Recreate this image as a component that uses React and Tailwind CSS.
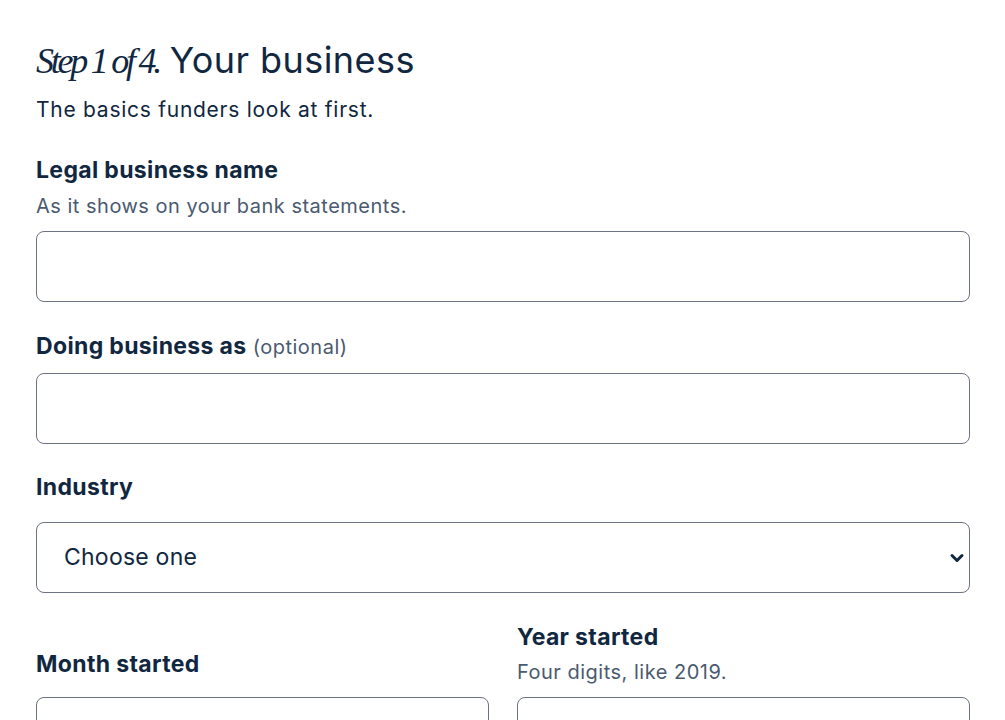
import React from 'react'

const sans = { fontFamily: 'Inter, "Noto Sans", sans-serif' }

const Field = ({ label, optional, hint, hintGap = 'mt-[7px]', children, className = '' }) => (
    <div className={`flex flex-col ${className}`}>
        <label className="text-[23px] leading-[30px] font-bold text-[#10273f] tracking-[0.015em]">
            {label}
            {optional && <span className="font-normal text-[20px] tracking-[0.025em] text-[#4a5a70]"> (optional)</span>}
        </label>
        {hint && <div className={`text-[20px] leading-[28px] tracking-[0.025em] text-[#4a5a70] ${hintGap}`}>{hint}</div>}
        {children}
    </div>
)

const TextInput = () => (
    <input
        type="text"
        className="h-[71px] w-full rounded-[8px] border border-[#6b7280] bg-white px-[27px] text-[23px] text-[#10273f] outline-none"
    />
)

export default function App() {
    return (
        <div className="bg-white min-h-screen px-[36px] pt-[38px] text-[#10273f]" style={sans}>
            <h1 className="text-[36px] leading-[44px] font-normal tracking-[0.012em]">
                <span className="italic tracking-[-0.09em]" style={{ fontFamily: '"Liberation Serif", serif' }}>
                    Step 1 of 4.
                </span>{' '}
                Your business
            </h1>
            <p className="text-[21px] leading-[28px] mt-[13px] tracking-[0.035em]">The basics funders look at first.</p>

            <div className="flex flex-col gap-[28.5px] mt-[31px] w-[934px]">
                <Field label="Legal business name" hint="As it shows on your bank statements.">
                    <div className="mt-[11px]"><TextInput /></div>
                </Field>
                <Field label="Doing business as" optional>
                    <div className="mt-[11px]"><TextInput /></div>
                </Field>
                <Field label="Industry">
                    <div className="mt-[20px] relative">
                        <select className="h-[71px] w-full appearance-none rounded-[8px] border border-[#6b7280] bg-white pl-[27px] pr-[40px] text-[23px] tracking-[0.01em] text-[#10273f] outline-none">
                            <option>Choose one</option>
                        </select>
                        <svg className="absolute right-[5px] top-1/2 -translate-y-1/2 pointer-events-none" width="16" height="14" viewBox="0 0 16 14">
                            <path d="M3 4.5 L8 9.5 L13 4.5" fill="none" stroke="#10273f" strokeWidth="3" strokeLinecap="round" strokeLinejoin="round" />
                        </svg>
                    </div>
                </Field>
                <div className="grid grid-cols-2 gap-[28px] items-end">
                    <Field label="Month started">
                        <div className="mt-[18px]"><TextInput /></div>
                    </Field>
                    <Field label="Year started" hint="Four digits, like 2019." hintGap="mt-[6px]">
                        <div className="mt-[11px]"><TextInput /></div>
                    </Field>
                </div>
            </div>
        </div>
    )
}
